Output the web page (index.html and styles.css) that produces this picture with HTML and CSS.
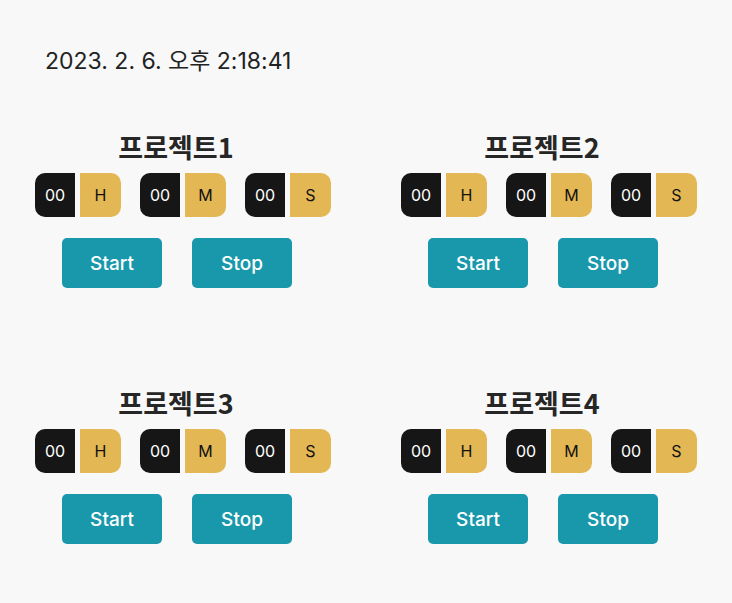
FILE: index.html
```html
<!DOCTYPE html>
<html lang="ko">
<head>
  <meta charset="UTF-8">
  <title>Project Timer</title>
  <link rel="stylesheet" href="styles.css">
</head>
<body>

<div class="clock">2023. 2. 6. 오후 2:18:41</div>

<div class="project-grid">

  <div class="project">
    <div class="project-title">프로젝트1</div>
    <div class="timer-row">
      <div class="timer"><span class="num">00</span><span class="unit">H</span></div>
      <div class="timer"><span class="num">00</span><span class="unit">M</span></div>
      <div class="timer"><span class="num">00</span><span class="unit">S</span></div>
    </div>
    <div class="button-row">
      <button class="btn">Start</button>
      <button class="btn">Stop</button>
    </div>
  </div>

  <div class="project">
    <div class="project-title">프로젝트2</div>
    <div class="timer-row">
      <div class="timer"><span class="num">00</span><span class="unit">H</span></div>
      <div class="timer"><span class="num">00</span><span class="unit">M</span></div>
      <div class="timer"><span class="num">00</span><span class="unit">S</span></div>
    </div>
    <div class="button-row">
      <button class="btn">Start</button>
      <button class="btn">Stop</button>
    </div>
  </div>

  <div class="project">
    <div class="project-title">프로젝트3</div>
    <div class="timer-row">
      <div class="timer"><span class="num">00</span><span class="unit">H</span></div>
      <div class="timer"><span class="num">00</span><span class="unit">M</span></div>
      <div class="timer"><span class="num">00</span><span class="unit">S</span></div>
    </div>
    <div class="button-row">
      <button class="btn">Start</button>
      <button class="btn">Stop</button>
    </div>
  </div>

  <div class="project">
    <div class="project-title">프로젝트4</div>
    <div class="timer-row">
      <div class="timer"><span class="num">00</span><span class="unit">H</span></div>
      <div class="timer"><span class="num">00</span><span class="unit">M</span></div>
      <div class="timer"><span class="num">00</span><span class="unit">S</span></div>
    </div>
    <div class="button-row">
      <button class="btn">Start</button>
      <button class="btn">Stop</button>
    </div>
  </div>

</div>

</body>
</html>
```

FILE: styles.css
```css
body {
  margin: 0;
  background-color: #f8f8f8;
  color: #222222;
  font-family: Inter, "Noto Sans CJK KR", sans-serif;
}

.clock {
  padding: 46px 0 0 45px;
  font-size: 23px;
  line-height: 30px;
}

.project-grid {
  margin-top: 53px;
  display: grid;
  grid-template-columns: 1fr 1fr;
  row-gap: 97px;
}

.project {
  display: flex;
  flex-direction: column;
  align-items: center;
}

.project-title {
  font-family: "Noto Sans CJK KR", Inter, sans-serif;
  font-size: 27px;
  font-weight: 700;
  line-height: 36px;
  padding-right: 14px;
  color: #262626;
}

.timer-row {
  margin-top: 8px;
  display: flex;
  gap: 19px;
}

.timer {
  display: flex;
  gap: 5px;
}

.num,
.unit {
  height: 44px;
  display: flex;
  align-items: center;
  justify-content: center;
  font-size: 16px;
}

.num {
  width: 40px;
  background-color: #161616;
  color: white;
  border-radius: 10px 0 0 10px;
}

.unit {
  width: 41px;
  background-color: #e3b854;
  color: #111111;
  border-radius: 0 10px 10px 0;
}

.button-row {
  margin-top: 21px;
  padding-right: 12px;
  display: flex;
  gap: 30px;
}

.btn {
  width: 100px;
  height: 50px;
  border: none;
  border-radius: 5px;
  background-color: #1a98ab;
  color: white;
  font-family: Inter, sans-serif;
  font-size: 19px;
  font-weight: 500;
  cursor: pointer;
}
```
